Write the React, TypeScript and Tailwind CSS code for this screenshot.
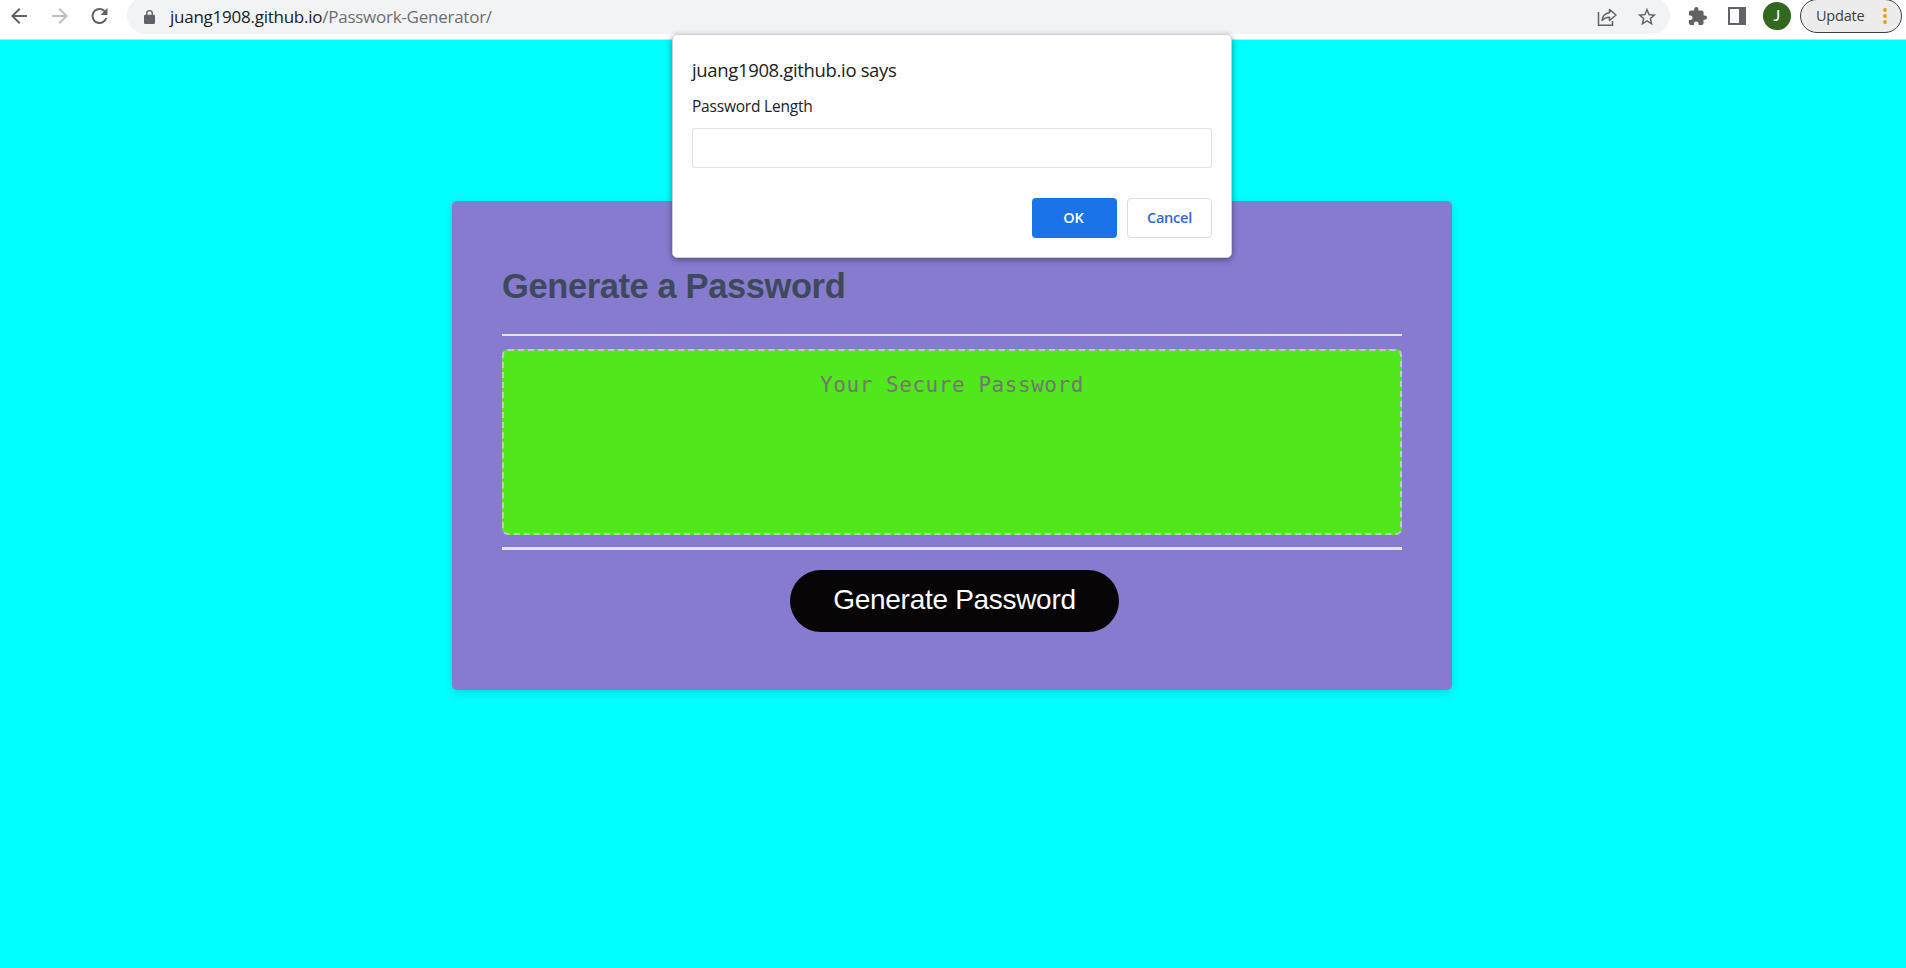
import React from "react";

const icon = "block shrink-0 fill-current";

function Toolbar() {
  return (
    <header className="flex h-10 w-full shrink-0 items-start overflow-hidden border-b border-[#d5dcdf] bg-white text-[#5f6368]">
      <div className="flex w-[127px] shrink-0 items-center pl-[7px] pt-1">
        <svg className={icon} width="24" height="24" viewBox="0 0 24 24">
          <path d="M20 11H7.83l5.59-5.59L12 4l-8 8 8 8 1.41-1.41L7.83 13H20z" />
        </svg>
        <svg className={icon + " ml-[17px] text-[#bcbec0]"} width="24" height="24" viewBox="0 0 24 24">
          <path d="M4 11h12.17l-5.59-5.59L12 4l8 8-8 8-1.41-1.41L16.17 13H4z" />
        </svg>
        <svg className={icon + " ml-[15px]"} width="25" height="24" viewBox="0 0 24 24">
          <path d="M17.65 6.35A7.96 7.96 0 0 0 12 4a8 8 0 1 0 7.73 10h-2.08A6 6 0 1 1 12 6c1.66 0 3.14.69 4.22 1.78L13 11h7V4z" />
        </svg>
      </div>
      <div className="-mt-[3px] flex h-[37px] w-[1543px] shrink-0 items-center rounded-full bg-[#f1f3f4] pl-[17px] pr-[12px] pt-[3px]">
        <svg className={icon} width="11" height="14" viewBox="4 1 16 21" preserveAspectRatio="none">
          <path d="M18 8h-1V6A5 5 0 0 0 7 6v2H6a2 2 0 0 0-2 2v10c0 1.100.9 2 2 2h12a2 2 0 0 0 2-2V10a2 2 0 0 0-2-2zM9 6a3 3 0 0 1 6 0v2H9z" />
        </svg>
        <span className="ml-[15px] whitespace-nowrap font-['Open_Sans',sans-serif] text-[17px] leading-6 tracking-[-0.25px] text-[#202124]">
          juang1908.github.io<span className="text-[#6b6f73]">/Passwork-Generator/</span>
        </span>
        <div className="ml-auto flex items-center gap-[18px]">
          <svg className="block" width="22" height="20" viewBox="0 0 22 20" fill="none" stroke="currentColor" strokeWidth="1.5">
            <path d="M2.500 5v13.200h14V14" />
            <path d="M13.500 2.500 20 8l-6.500 5.500v-3.300c-3.500 0-5.500 1-7.500 3.300.5-4 3-7.200 7.500-7.700z" strokeLinejoin="round" />
          </svg>
          <svg className={icon} width="22" height="22" viewBox="0 0 24 24">
            <path d="m22 9.240-7.190-.62L12 2 9.190 8.630 2 9.240l5.460 4.730L5.820 21 12 17.270 18.180 21l-1.630-7.030zM12 15.400l-3.760 2.270 1-4.280-3.320-2.880 4.380-.38L12 6.100l1.710 4.040 4.380.38-3.320 2.880 1 4.280z" />
          </svg>
        </div>
      </div>
      <div className="flex items-start">
        <svg className={icon + " ml-[19px] mt-[7px]"} width="18" height="18" viewBox="2 1 21 21">
          <path d="M20.500 11H19V7a2 2 0 0 0-2-2h-4V3.500a2.500 2.500 0 0 0-5 0V5H4a2 2 0 0 0-2 2v3.800h1.500a2.700 2.700 0 0 1 0 5.400H2V20c0 1.100.9 2 2 2h3.800v-1.500a2.700 2.700 0 0 1 5.400 0V22H17a2 2 0 0 0 2-2v-4h1.500a2.500 2.500 0 0 0 0-5z" />
        </svg>
        <svg className={icon + " ml-[21px] mt-[7px]"} width="18" height="18" viewBox="0 0 18 18">
          <path fillRule="evenodd" d="M0 0h18v18H0zM2 2v14h9V2z" />
        </svg>
        <div className="ml-[17px] mt-[2px] flex size-7 items-center justify-center rounded-full bg-[#33691e] pb-[3px] font-['Lato',sans-serif] text-[16px] text-white">J</div>
        <div className="-mt-[1px] ml-[9px] flex h-[34px] w-[102px] items-center rounded-full border-[1.5px] border-[#3c4043] bg-[#ececec] pl-[15px] pr-[14px]">
          <span className="font-['Open_Sans',sans-serif] text-[14.500px] tracking-[-0.2px] text-[#3c4043]">Update</span>
          <svg className="ml-auto block" width="4" height="16" viewBox="0 0 4 16" fill="#f29900">
            <circle cx="2" cy="2" r="1.900" />
            <circle cx="2" cy="8" r="1.900" />
            <circle cx="2" cy="14" r="1.900" />
          </svg>
        </div>
      </div>
    </header>
  );
}

function PromptDialog() {
  return (
    <div className="absolute left-[672px] top-[34px] flex h-56 w-[560px] flex-col rounded-[5px] border border-[#d0d0d6] bg-white px-[19px] font-['Open_Sans',sans-serif] text-[#202124] shadow-[0_2px_6px_rgba(0,0,0,0.4)]">
      <h2 className="mt-[21px] whitespace-nowrap text-[18.500px] leading-7 tracking-[-0.35px]">juang1908.github.io says</h2>
      <label className="mt-[12px] text-[15.500px] leading-5 tracking-[-0.2px]" htmlFor="len">Password Length</label>
      <input id="len" className="mt-[12px] h-10 w-full rounded-[3px] border border-[#dfe1e5] outline-none" />
      <div className="mt-[30px] flex justify-end gap-[10px] text-[14.500px] font-semibold tracking-[-0.2px]">
        <button className="h-10 w-[85px] rounded bg-[#1a73e8] pr-[2px] text-white">OK</button>
        <button className="h-10 w-[85px] rounded border border-[#dadce0] text-[#3367d6]">Cancel</button>
      </div>
    </div>
  );
}

export default function App() {
  return (
    <div className="relative flex h-[968px] w-[1906px] flex-col items-center overflow-hidden bg-[#00ffff] font-['Liberation_Sans',Arial,sans-serif]">
      <Toolbar />
      <main className="mr-[2px] mt-[161px] flex h-[489px] w-[1000px] shrink-0 flex-col rounded-[5px] bg-[#877bd0] px-[50px] shadow-[0_3px_10px_rgba(0,0,0,0.14)]">
        <h1 className="mt-[65px] text-[34.500px] font-bold leading-10 tracking-[-0.4px] text-[#3e4a5b]">Generate a Password</h1>
        <div className="mt-[28px] h-[2px] shrink-0 bg-[#e6e3f3]" />
        <textarea
          className="mt-[13px] block h-[186px] w-full shrink-0 resize-none rounded-[6px] border-2 border-dashed border-[#c6c6cc] bg-[#50e81a] pt-[18px] text-center font-['DejaVu_Sans_Mono',monospace] text-[21px] leading-8 tracking-[0.55px] outline-none placeholder:text-[#757575]"
          placeholder="Your Secure Password"
        />
        <div className="mt-3 h-[3px] shrink-0 bg-[#e6e3f3]" />
        <button className="ml-[288px] mt-5 h-[62px] w-[329px] shrink-0 rounded-full bg-[#070506] pb-[2px] text-[28px] tracking-[-0.3px] text-white">
          Generate Password
        </button>
      </main>
      <PromptDialog />
    </div>
  );
}
